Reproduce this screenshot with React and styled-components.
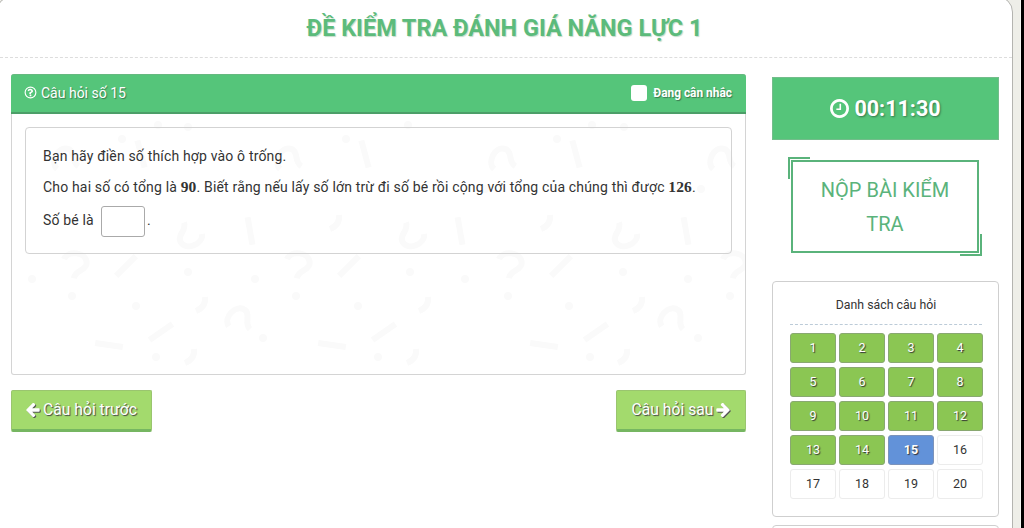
import React, { useState } from "react";
import styled, { createGlobalStyle, css } from "styled-components";

const GlobalStyle = createGlobalStyle`
    * {
        box-sizing: border-box;
    }

    body {
        margin: 0;
        overflow: hidden;
        background: #000;
        font-family: Roboto, "Liberation Sans", sans-serif;
        color: #333;
    }
`;

/* page backdrop, the black strip on the right is the body */
const Page = styled.div`
    width: 1021px;
    height: 528px;
    overflow: hidden;
    background: #eeeee8;
    border-right: 1px solid #f8f8f5;
`;

const Sheet = styled.div`
    width: 1017px;
    height: 560px;
    margin: -4px 0 0 -4px;
    padding: 4px 0 0 4px;
    background: #fff;
    border: 1px solid #b4b4b0;
    border-radius: 16px;
`;

const Header = styled.header`
    height: 58px;
    margin-top: -1px;
    margin-left: -1px;
    padding-top: 12px;
    border-bottom: 1px dashed #ddd;
    text-align: center;
`;

const Title = styled.h1`
    margin: 0 0 0 -3px;
    font-size: 23.45px;
    line-height: 32px;
    font-weight: 700;
    color: #5cbb7b;
    text-shadow: 1px 1px 1px #c4dccb;
`;

const Columns = styled.main`
    display: flex;
    align-items: flex-start;
    gap: 26px;
    padding: 16px 0 0 10px;
`;

const Left = styled.section`
    width: 735px;
`;

const Panel = styled.div`
    position: relative;
    height: 301px;
    border: 1px solid #d4d4d4;
    border-top: 0;
    border-radius: 3px;
    background: #fff;
`;

const PanelHead = styled.div`
    position: relative;
    display: flex;
    align-items: center;
    justify-content: space-between;
    height: 40px;
    margin: 0 -1px;
    padding: 0 14px 2px 13px;
    border-top: 1px solid #66b980;
    border-bottom: 2px solid #4c9e68;
    border-radius: 3px 3px 0 0;
    background: #55c57a;
    color: #fff;
    font-size: 14px;
    text-shadow: 1px 1px 1px #3b7a50;
`;

const HeadLabel = styled.span`
    display: flex;
    align-items: center;
    gap: 4px;
`;

const Consider = styled.label`
    display: flex;
    align-items: center;
    gap: 6px;
    font-size: 11.9px;
    font-weight: 700;
`;

const CheckBox = styled.span`
    width: 16px;
    height: 16px;
    border-radius: 3px;
    background: #fff;
`;

const Pattern = styled.svg`
    position: absolute;
    top: 40px;
    left: 0;
    width: 733px;
    height: 260px;
`;

const Question = styled.div`
    position: relative;
    height: 127px;
    margin: 13px 13px 0 13px;
    padding: 12px 17px;
    border: 1px solid #d3d3d3;
    border-radius: 4px;
    font-size: 14px;
`;

const Line = styled.p`
    display: flex;
    align-items: center;
    height: 31px;
    margin: 0;
    white-space: pre;
    letter-spacing: 0.17px;
`;

const AnswerLine = styled(Line)`
    height: 35px;
`;

const Num = styled.b`
    font-family: "Liberation Serif", serif;
    font-size: 15.5px;
`;

const Answer = styled.input`
    width: 44px;
    height: 31px;
    margin: 3px 2px 0 7px;
    border: 1px solid #aaa;
    border-radius: 3px;
    background: #fff;
    outline: none;
`;

const Nav = styled.div`
    display: flex;
    justify-content: space-between;
    margin-top: 15px;
`;

const NavButton = styled.button`
    display: flex;
    align-items: center;
    justify-content: center;
    gap: 3px;
    width: ${(p) => p.$width};
    height: 42px;
    padding: 0 0 1px;
    border: 1px solid #9ac56f;
    border-bottom: 3px solid #76b661;
    border-radius: 2px;
    background: #a3da6d;
    color: #fff;
    font-family: inherit;
    font-size: 15.7px;
    text-shadow: 1px 1px 1px #444;

    svg {
        filter: drop-shadow(1px 1px 0.5px #555);
    }
`;

const Side = styled.aside`
    width: 227px;
    padding-top: 3px;
`;

const Timer = styled.div`
    display: flex;
    align-items: center;
    justify-content: center;
    gap: 5px;
    height: 63px;
    border: 1px solid #73bd8b;
    background: #55c57a;
    color: #fff;
    font-size: 21.5px;
    font-weight: 700;
    text-shadow: 1px 1px 2px #35784c;
`;

const Submit = styled.button`
    position: relative;
    display: block;
    width: 188px;
    height: 93px;
    margin: 20px 0 0 19px;
    padding: 0 20px;
    border: 2px solid #5ab37b;
    background: #fff;
    color: #5ab37b;
    font-family: inherit;
    font-size: 20px;
    line-height: 34px;

    /* loose corner strokes */
    &::before,
    &::after {
        content: "";
        position: absolute;
        width: 20px;
        height: 20px;
        border: 0 solid #5ab37b;
    }

    &::before {
        top: -5px;
        left: -5px;
        border-width: 2px 0 0 2px;
    }

    &::after {
        right: -5px;
        bottom: -5px;
        border-width: 0 2px 2px 0;
    }
`;

const Card = styled.div`
    height: 236px;
    margin-top: ${(p) => p.$top};
    padding: 0 16px 0 17px;
    border: 1px solid #cfcfcf;
    border-radius: 4px;
    background: #fff;
`;

const CardTitle = styled.div`
    height: 43px;
    margin-bottom: 8px;
    border-bottom: 1px dashed #bccbd8;
    font-size: 12.3px;
    line-height: 46px;
    text-align: center;
`;

const Grid = styled.div`
    display: grid;
    grid-template-columns: repeat(4, 46px);
    gap: 4px 3px;
`;

const cellStates = {
    done: css`
        background: #8bc653;
        border-color: #89a871;
        color: #fff;
        text-shadow: 1px 1px 1px #333;
    `,
    current: css`
        background: #6292d9;
        border-color: #7c93ba;
        color: #fff;
        font-weight: 700;
        text-shadow: 1px 1px 1px #333;
    `,
    open: css`
        background: #fff;
        border-color: #ececec;
        color: #333;
    `,
};

const Cell = styled.button`
    height: 30px;
    padding: 0 0 2px;
    border: 1px solid;
    border-radius: 3px;
    font-family: inherit;
    font-size: 12.5px;
    ${(p) => cellStates[p.$state]}
`;

const QuestionIcon = () => (
    <svg width="13" height="13" viewBox="-80 -80 1696 1696" fill="currentColor">
        <circle cx="768" cy="768" r="700" fill="none" stroke="currentColor" strokeWidth="150" />
        <path d="M880 1072v160q0 14-9 23t-23 9h-160q-14 0-23-9t-9-23v-160q0-14 9-23t23-9h160q14 0 23 9t9 23zm213-496q0 50-15 90t-45.5 69-52 44-59.5 36q-32 18-46.5 28t-26 24-11.5 29v32q0 14-9 23t-23 9h-160q-14 0-23-9t-9-23v-68q0-35 10.5-64.5t24-47.5 39-35.5 41-25.5 44.5-21q53-25 75-43t22-49q0-42-43.5-71.5t-95.5-29.5q-56 0-95 27-29 20-80 83-9 12-25 12-11 0-19-6l-108-82q-10-7-12-20t5-23q122-192 349-192 129 0 238.5 89.5t109.5 214.5z" />
    </svg>
);

const ClockIcon = () => (
    <svg width="19" height="19" viewBox="0 128 1536 1536" fill="currentColor">
        <path d="M896 544v448q0 14-9 23t-23 9h-320q-14 0-23-9t-9-23v-64q0-14 9-23t23-9h224v-352q0-14 9-23t23-9h64q14 0 23 9t9 23zm416 352q0-148-73-273t-198-198-273-73-273 73-198 198-73 273 73 273 198 198 273 73 273-73 198-198 73-273zm224 0q0 209-103 385.5t-279.5 279.5-385.5 103-385.5-103-279.5-279.5-103-385.5 103-385.5 279.5-279.5 385.5-103 385.5 103 279.5 279.5 103 385.5z" />
    </svg>
);

const ArrowIcon = ({ flip }) => (
    <svg width="14" height="14" viewBox="192 192 1472 1536" fill="currentColor">
        <path
            transform={flip ? "translate(1856 0) scale(-1 1)" : undefined}
            d="M1664 896v128q0 53-32.5 90.5t-84.5 37.5h-704l293 294q38 36 38 90t-38 90l-75 76q-37 37-90 37-52 0-91-37l-651-652q-37-37-37-90 0-52 37-91l651-650q38-38 91-38 52 0 90 38l75 74q38 38 38 91t-38 91l-293 293h704q52 0 84.5 37.5t32.5 90.5z"
        />
    </svg>
);

/* faint marks behind the question: [x, y, angle] */
const hooks = [
    [62, 152, 10], [285, 152, 10], [497, 152, 10], [721, 152, 10],
    [228, 208, -45], [661, 208, -45],
    [178, 119, 160], [400, 119, 160], [613, 119, 160],
    [55, 48, -60], [278, 48, -60], [492, 48, -60], [711, 48, -60],
];
const strokes = [
    [114, 152, -45], [337, 152, -45], [549, 152, -45],
    [149, 218, -35], [372, 218, -35], [584, 218, -35],
    [97, 231, 8], [320, 231, 8], [532, 231, 8],
    [238, 117, 80], [448, 117, 80], [674, 117, 80],
    [129, 40, 75], [353, 40, 75], [564, 40, 75],
];
const dots = [
    [20, 165], [243, 165], [453, 165], [676, 165],
    [60, 182], [284, 182], [496, 182], [718, 182],
    [176, 158], [398, 158], [611, 158], [124, 192], [346, 192], [557, 192],
    [144, 243], [366, 243], [578, 243], [251, 224], [686, 224],
    [146, 11], [176, 13], [396, 11], [580, 11], [612, 13],
    [110, 25], [334, 25], [545, 25], [38, 75], [262, 75], [473, 75], [689, 75],
];
const commas = [
    [189, 190], [412, 190], [626, 190], [178, 242], [400, 242], [611, 242],
    [323, 108], [534, 108], [100, 108],
];

const Marks = () => (
    <Pattern viewBox="0 0 733 260" fill="none" stroke="#fafafa" strokeWidth="6">
        {hooks.map(([x, y, a], i) => (
            <path key={i} d="M-11-5C-9-15 10-16 12-5C13 3 2 3 2 12" transform={`translate(${x} ${y}) rotate(${a})`} />
        ))}
        {strokes.map(([x, y, a], i) => (
            <path key={i} d="M-14 0H14" transform={`translate(${x} ${y}) rotate(${a})`} />
        ))}
        {dots.map(([x, y], i) => (
            <circle key={i} cx={x} cy={y} r="4" fill="#fafafa" stroke="none" />
        ))}
        {commas.map(([x, y], i) => (
            <path key={i} d="M4-7Q5 3-5 7" transform={`translate(${x} ${y})`} />
        ))}
    </Pattern>
);

const stateOf = (n) => {
    if (n < 15) return "done";
    return n === 15 ? "current" : "open";
};

export default function App() {
    const [answer, setAnswer] = useState("");

    return (
        <>
            <GlobalStyle />
            <Page>
                <Sheet>
                    <Header>
                        <Title>ĐỀ KIỂM TRA ĐÁNH GIÁ NĂNG LỰC 1</Title>
                    </Header>
                    <Columns>
                        <Left>
                            <Panel>
                                <Marks />
                                <PanelHead>
                                    <HeadLabel>
                                        <QuestionIcon />
                                        Câu hỏi số 15
                                    </HeadLabel>
                                    <Consider>
                                        <CheckBox />
                                        Đang cân nhắc
                                    </Consider>
                                </PanelHead>
                                <Question>
                                    <Line>Bạn hãy điền số thích hợp vào ô trống.</Line>
                                    <Line>
                                        Cho hai số có tổng là <Num>90</Num>. Biết rằng nếu lấy số lớn trừ đi số bé rồi cộng với tổng của chúng thì được <Num>126</Num>.
                                    </Line>
                                    <AnswerLine>
                                        Số bé là
                                        <Answer value={answer} onChange={(e) => setAnswer(e.target.value)} />.
                                    </AnswerLine>
                                </Question>
                            </Panel>
                            <Nav>
                                <NavButton $width="141px">
                                    <ArrowIcon />
                                    Câu hỏi trước
                                </NavButton>
                                <NavButton $width="130px">
                                    Câu hỏi sau
                                    <ArrowIcon flip />
                                </NavButton>
                            </Nav>
                        </Left>
                        <Side>
                            <Timer>
                                <ClockIcon />
                                00:11:30
                            </Timer>
                            <Submit>NỘP BÀI KIỂM TRA</Submit>
                            <Card $top="28px">
                                <CardTitle>Danh sách câu hỏi</CardTitle>
                                <Grid>
                                    {Array.from({ length: 20 }, (_, i) => i + 1).map((n) => (
                                        <Cell key={n} $state={stateOf(n)}>{n}</Cell>
                                    ))}
                                </Grid>
                            </Card>
                            <Card $top="8px" />
                        </Side>
                    </Columns>
                </Sheet>
            </Page>
        </>
    );
}
